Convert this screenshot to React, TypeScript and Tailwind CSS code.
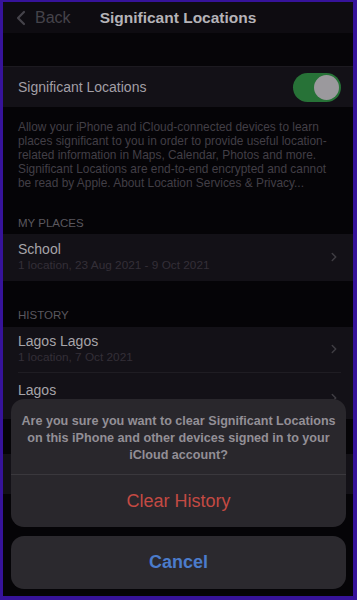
import { ChevronLeft, ChevronRight } from "lucide-react";

const font = { fontFamily: '"Liberation Sans", Arial, sans-serif' };

type Place = { title: string; sub?: string; last?: boolean; tall?: boolean; low?: boolean };

function PlaceRow({ title, sub, last, tall, low }: Place) {
  return (
    <div className={`flex items-center bg-[#131117] pl-[15px] pr-[12px] ${tall ? "h-[47px]" : "h-[46px]"}`}>
      <div className={`flex-1 flex items-center h-full ${low ? "pt-[5px]" : ""} ${last ? "" : "border-b border-[#1f1d23]"}`}>
        <div className="flex-1">
          <p className="text-[14px] leading-[17px] text-[#a6a4a9]">{title}</p>
          {sub && <p className="text-[11.8px] leading-[15px] text-[#332f37]">{sub}</p>}
        </div>
        <ChevronRight size={14} strokeWidth={2.5} className="text-[#3f3d43]" />
      </div>
    </div>
  );
}

export default function App() {
  return (
    <div className="w-[357px] h-[600px] bg-[#36139a] pl-[3px] pr-[4px] pt-[2px] pb-[4px]" style={font}>
      <div className="relative w-full h-full overflow-hidden bg-[#050407] flex flex-col">
        {/* Nav */}
        <div className="relative h-[31px] bg-[#0e0c11] flex items-center flex-shrink-0">
          <div className="flex items-center pl-[6px] text-[#45434a]">
            <ChevronLeft size={24} strokeWidth={2.2} />
            <span className="text-[16px] ml-[2px]">Back</span>
          </div>
          <h1 className="absolute left-0 right-0 text-center text-[15.5px] font-bold text-[#b5b3b8]">Significant Locations</h1>
        </div>

        <div className="h-[33px] bg-[#060508] flex-shrink-0" />

        {/* Toggle */}
        <div className="h-[41px] bg-[#131117] border-t border-[#1c1a20] flex items-center justify-between pl-[15px] pr-[12px] flex-shrink-0">
          <span className="text-[14px] text-[#a29fa6]">Significant Locations</span>
          <div className="w-[48px] h-[29px] rounded-full bg-[#277237] flex items-center justify-end pr-[2px]">
            <div className="w-[25px] h-[25px] rounded-full bg-[#9b999d]" />
          </div>
        </div>

        <p className="px-[15px] pt-[14px] text-[11.9px] leading-[13.9px] text-[#423f46]">
          Allow your iPhone and iCloud-connected devices to learn places significant to you in order to provide useful location-related information in Maps, Calendar, Photos and more. Significant Locations are end-to-end encrypted and cannot be read by Apple. About Location Services &amp; Privacy...
        </p>

        <p className="px-[15px] pt-[25px] pb-[4px] text-[11.5px] leading-[14px] text-[#5a575e]">MY PLACES</p>
        <PlaceRow title="School" sub="1 location, 23 Aug 2021 - 9 Oct 2021" last tall />

        <p className="px-[15px] pt-[27px] pb-[5px] text-[11.5px] leading-[14px] text-[#5a575e]">HISTORY</p>
        <PlaceRow title="Lagos Lagos" sub="1 location, 7 Oct 2021" />
        <PlaceRow title="Lagos" sub="1 location, 5 Oct 2021" last low />

        <div className="h-[35px]" />
        <div className="h-[40px] bg-[#131117]" />

        {/* Action sheet */}
        <div className="absolute left-[8px] right-[7px] bottom-[7px] flex flex-col gap-[9px]">
          <div className="rounded-[13px] bg-[#29272c] overflow-hidden">
            <p className="px-[6px] pt-[14px] pb-[10px] text-center text-[12.6px] leading-[17px] font-bold text-[#938f96]">
              Are you sure you want to clear Significant Locations on this iPhone and other devices signed in to your iCloud account?
            </p>
            <div className="h-[53px] border-t border-[#3a383d] flex items-center justify-center text-[18px] text-[#c44a43]">Clear History</div>
          </div>
          <div className="h-[53px] rounded-[13px] bg-[#2b292e] flex items-center justify-center text-[18px] font-bold text-[#4b7ccb]">Cancel</div>
        </div>
      </div>
    </div>
  );
}
